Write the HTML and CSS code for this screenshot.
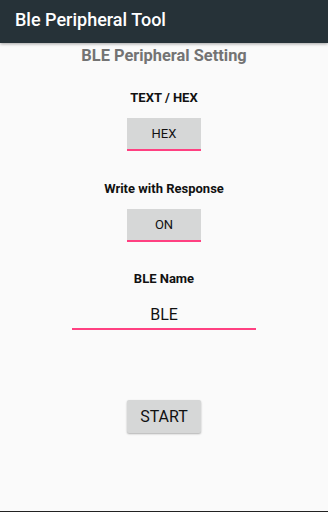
FILE: index.html
```html
<!DOCTYPE html>
<html>
<head>
<meta charset="utf-8">
<link rel="stylesheet" href="styles.css">
</head>
<body>
<div class="screen">
  <header class="appbar">Ble Peripheral Tool</header>
  <main class="content">
    <h1 class="title">BLE Peripheral Setting</h1>
    <div class="label label-first">TEXT / HEX</div>
    <div class="toggle">HEX</div>
    <div class="label">Write with Response</div>
    <div class="toggle">ON</div>
    <div class="label label-tight">BLE Name</div>
    <div class="field">BLE</div>
    <div class="start">START</div>
  </main>
  <div class="navline"></div>
</div>
</body>
</html>
```
FILE: styles.css
```css
html, body {
  margin: 0;
  padding: 0;
  background: #fafafa;
}
.screen {
  width: 328px;
  height: 512px;
  display: flex;
  flex-direction: column;
  font-family: Roboto, "Liberation Sans", sans-serif;
  background: #fafafa;
  overflow: hidden;
}
.appbar {
  height: 43px;
  background: #263238;
  color: #ffffff;
  font-size: 18px;
  font-weight: 500;
  line-height: 40px;
  padding-left: 15px;
  box-shadow: 0 1px 3px rgba(0,0,0,0.35);
  position: relative;
  z-index: 1;
  flex: none;
}
.content {
  flex: 1;
  display: flex;
  flex-direction: column;
  align-items: center;
}
.title {
  margin: 3px 0 0;
  font-size: 16.4px;
  font-weight: 700;
  line-height: 20px;
  color: #737373;
}
.label {
  margin-top: 30px;
  font-size: 13px;
  font-weight: 700;
  line-height: 16px;
  color: #111111;
}
.label-first {
  margin-top: 24px;
}
.label-tight {
  margin-top: 29px;
}
.toggle {
  margin-top: 12px;
  width: 74px;
  height: 33px;
  box-sizing: border-box;
  background: #d6d7d7;
  border-bottom: 2px solid #ff4081;
  font-size: 13px;
  line-height: 31px;
  text-align: center;
  color: #111111;
}
.field {
  margin-top: 15px;
  width: 184px;
  box-sizing: border-box;
  border-bottom: 2px solid #ff4081;
  font-size: 16px;
  line-height: 26px;
  text-align: center;
  color: #111111;
}
.start {
  margin-top: 70px;
  width: 74px;
  height: 33px;
  background: #d6d7d7;
  border-radius: 2px;
  box-shadow: 0 1px 2px rgba(0,0,0,0.3);
  font-size: 16px;
  line-height: 33px;
  text-align: center;
  color: #111111;
}
.navline {
  height: 1px;
  background: #222222;
  flex: none;
}
```
